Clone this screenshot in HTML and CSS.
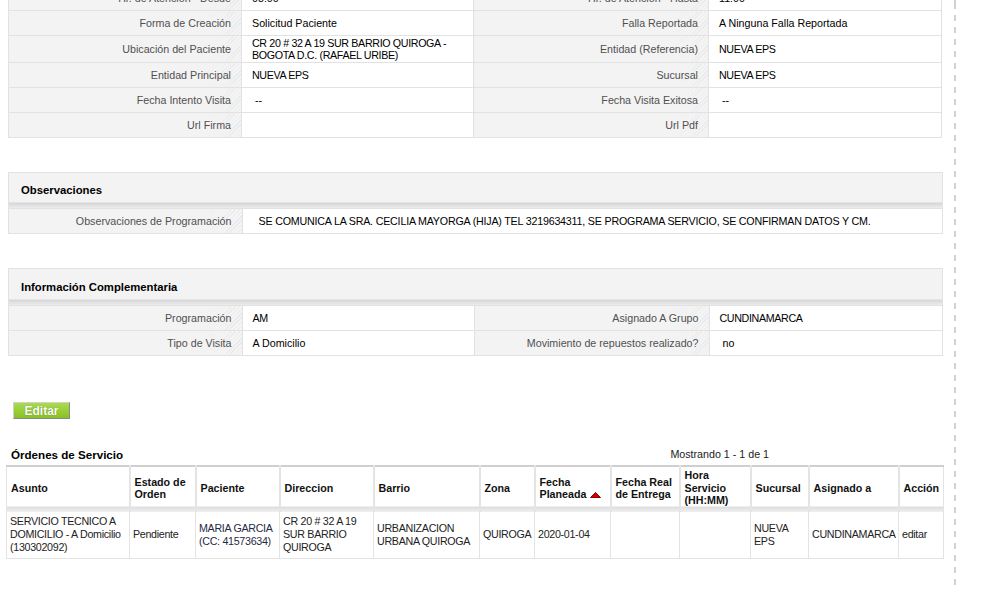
FILE: index.html
```
<!DOCTYPE html>
<html>
<head>
    <meta charset="UTF-8">
    <title>Detalle de Servicio</title>
    <link rel="stylesheet" href="styles.css">
</head>

<body>
    <div class="page">
        <div class="content">

            <table class="detail top">
                <colgroup>
                    <col class="c1"><col class="c2"><col class="c3"><col class="c4">
                </colgroup>
                <tr>
                    <td class="label">Hr. de Atención - Desde</td>
                    <td class="value">08:00</td>
                    <td class="label">Hr. de Atención - Hasta</td>
                    <td class="value">11:00</td>
                </tr>
                <tr>
                    <td class="label">Forma de Creación</td>
                    <td class="value">Solicitud Paciente</td>
                    <td class="label">Falla Reportada</td>
                    <td class="value">A Ninguna Falla Reportada</td>
                </tr>
                <tr>
                    <td class="label">Ubicación del Paciente</td>
                    <td class="value caps">CR 20 # 32 A 19 SUR BARRIO QUIROGA - BOGOTA D.C. (RAFAEL URIBE)</td>
                    <td class="label">Entidad (Referencia)</td>
                    <td class="value caps">NUEVA EPS</td>
                </tr>
                <tr>
                    <td class="label">Entidad Principal</td>
                    <td class="value caps">NUEVA EPS</td>
                    <td class="label">Sucursal</td>
                    <td class="value caps">NUEVA EPS</td>
                </tr>
                <tr>
                    <td class="label">Fecha Intento Visita</td>
                    <td class="value">&nbsp;--</td>
                    <td class="label">Fecha Visita Exitosa</td>
                    <td class="value">&nbsp;--</td>
                </tr>
                <tr>
                    <td class="label">Url Firma</td>
                    <td class="value"></td>
                    <td class="label">Url Pdf</td>
                    <td class="value"></td>
                </tr>
            </table>

            <div class="section obs">
                <h3 class="section-title">Observaciones</h3>
                <table class="detail">
                    <colgroup>
                        <col class="c1"><col>
                    </colgroup>
                    <tr>
                        <td class="label">Observaciones de Programación</td>
                        <td class="value wide">SE COMUNICA LA SRA. CECILIA MAYORGA (HIJA) TEL 3219634311, SE PROGRAMA SERVICIO, SE CONFIRMAN DATOS Y CM.</td>
                    </tr>
                </table>
            </div>

            <div class="section info">
                <h3 class="section-title">Información Complementaria</h3>
                <table class="detail">
                    <colgroup>
                        <col class="c1"><col class="c2"><col class="c3"><col class="c4">
                    </colgroup>
                    <tr>
                        <td class="label">Programación</td>
                        <td class="value caps">AM</td>
                        <td class="label">Asignado A Grupo</td>
                        <td class="value caps">CUNDINAMARCA</td>
                    </tr>
                    <tr>
                        <td class="label">Tipo de Visita</td>
                        <td class="value">A Domicilio</td>
                        <td class="label">Movimiento de repuestos realizado?</td>
                        <td class="value">&nbsp;no</td>
                    </tr>
                </table>
            </div>

            <button class="btn-edit" type="button">Editar</button>

            <div class="list-head">
                <h3 class="list-title">Órdenes de Servicio</h3>
                <span class="paging">Mostrando 1 - 1 de 1</span>
            </div>

            <table class="orders">
                <colgroup>
                    <col style="width:123px"><col style="width:66px"><col style="width:84px">
                    <col style="width:94px"><col style="width:106px"><col style="width:55px">
                    <col style="width:76px"><col style="width:69px"><col style="width:71px">
                    <col style="width:58px"><col style="width:90px"><col style="width:45px">
                </colgroup>
                <thead>
                    <tr>
                        <th>Asunto</th>
                        <th>Estado de Orden</th>
                        <th>Paciente</th>
                        <th>Direccion</th>
                        <th>Barrio</th>
                        <th>Zona</th>
                        <th>Fecha Planeada <svg class="sort" width="11" height="6" viewBox="0 0 11 6"><polygon points="0.5,5.5 5.5,0.5 10.5,5.5" fill="#d40000" stroke="#8a0000" stroke-width="1"/></svg></th>
                        <th>Fecha Real de Entrega</th>
                        <th>Hora Servicio (HH:MM)</th>
                        <th>Sucursal</th>
                        <th>Asignado a</th>
                        <th>Acción</th>
                    </tr>
                </thead>
                <tbody>
                    <tr>
                        <td>SERVICIO TECNICO A DOMICILIO - A Domicilio (130302092)</td>
                        <td>Pendiente</td>
                        <td class="patient">MARIA GARCIA (CC: 41573634)</td>
                        <td>CR 20 # 32 A 19 SUR BARRIO QUIROGA</td>
                        <td>URBANIZACION URBANA QUIROGA</td>
                        <td>QUIROGA</td>
                        <td>2020-01-04</td>
                        <td></td>
                        <td></td>
                        <td>NUEVA EPS</td>
                        <td>CUNDINAMARCA</td>
                        <td><a href="#">editar</a></td>
                    </tr>
                </tbody>
            </table>

        </div>
        <div class="rail"></div>
    </div>
</body>
</html>
```

FILE: styles.css
```
html, body {
    margin: 0;
    padding: 0;
    background: #ffffff;
}

body {
    font-family: "Liberation Sans", Arial, sans-serif;
    font-size: 10.7px;
    color: #000;
    overflow: hidden;
}

.page {
    display: flex;
    min-height: 100vh;
}

.content {
    width: 937px;
    padding-left: 6px;
}

.rail {
    width: 2px;
    margin-left: 11px;
    background: repeating-linear-gradient(to bottom, #d2d2d2 0 6px, transparent 6px 12px);
    background-position: 0 3px;
}

/* detail blocks */

table.detail {
    width: 933px;
    margin: 0 2px;
    border-collapse: collapse;
    table-layout: fixed;
}

table.detail.top {
    margin-top: -15px;
}

col.c1 { width: 233px; }
col.c2 { width: 232px; }
col.c3 { width: 235px; }
col.c4 { width: 233px; }

table.detail td {
    height: 22px;
    padding: 1px 10px;
    line-height: 12px;
    vertical-align: middle;
    border: 1px solid #e2e2e2;
}

td.label {
    text-align: right;
    color: #505050;
    background:
        linear-gradient(to right, #f3f3f3 0, #f3f3f3 85%, rgba(243, 243, 243, 0) 100%),
        repeating-linear-gradient(-45deg, #e6e6e6 0 1px, #f6f6f6 1px 3px);
}

td.value {
    color: #000;
    background: #fff;
}

td.caps {
    letter-spacing: -0.35px;
}

td.value.wide {
    padding-left: 16px;
    letter-spacing: -0.2px;
}

.section {
    width: 933px;
    margin: 34px 2px 0;
    border: 1px solid #e2e2e2;
    border-bottom: 0;
}

.section table.detail {
    margin: 0;
    width: 933px;
}

.section table.detail td:first-child {
    border-left: 0;
}

.section table.detail td:last-child {
    border-right: 0;
}

.section-title {
    margin: 0;
    height: 30px;
    padding: 0 12px 5px;
    line-height: 35px;
    font-size: 11.3px;
    font-weight: bold;
    color: #000;
    background: linear-gradient(to bottom, #f3f3f3 0, #f3f3f3 calc(100% - 6px), #d6d6d6 calc(100% - 5px), #ececec 100%);
}

.info .section-title {
    height: 31px;
    line-height: 36px;
}

/* edit button */

.btn-edit {
    display: block;
    margin: 46px 0 0 7px;
    width: 57px;
    height: 17px;
    padding: 0;
    font-family: "Liberation Sans", Arial, sans-serif;
    font-size: 12px;
    font-weight: bold;
    line-height: 14px;
    color: #fff;
    text-shadow: 0 0 1px #4d7a10;
    border: 1px solid;
    border-color: #d0d0d0 #8a8a8a #8a8a8a #d0d0d0;
    background: linear-gradient(to bottom, #a9dc4e 0, #97cc34 60%, #89c027 100%);
}

/* orders list */

.list-head {
    display: flex;
    align-items: center;
    height: 20px;
    margin-top: 25px;
    margin-bottom: 1px;
}

.list-title {
    margin: 0 0 0 5px;
    font-size: 11.6px;
    font-weight: bold;
}

.paging {
    margin-left: auto;
    margin-right: 174px;
    color: #222;
}

table.orders {
    width: 937px;
    border-collapse: collapse;
    table-layout: fixed;
    border-top: 2px solid #cfcfcf;
}

table.orders th {
    height: 38px;
    padding: 2px 2px 5px 4px;
    text-align: left;
    font-weight: bold;
    line-height: 12.5px;
    color: #111;
    vertical-align: middle;
    border-left: 2px solid #e4e4e4;
    background: linear-gradient(to bottom, #fff 0, #fff calc(100% - 6px), #dedede calc(100% - 5px), #efefef 100%);
}

table.orders th:first-child {
    border-left: 1px solid #e4e4e4;
}

table.orders th:last-child {
    border-right: 1px solid #e4e4e4;
}

.sort {
    vertical-align: 0;
    margin-left: 1px;
}

table.orders td {
    padding: 3px 1px 4px 3px;
    line-height: 13px;
    letter-spacing: -0.3px;
    color: #222;
    vertical-align: middle;
    border: 1px solid #e4e4e4;
    border-top: 0;
}

table.orders td.patient {
    color: #1f2a44;
}

table.orders a {
    color: #222;
    text-decoration: none;
}
```
